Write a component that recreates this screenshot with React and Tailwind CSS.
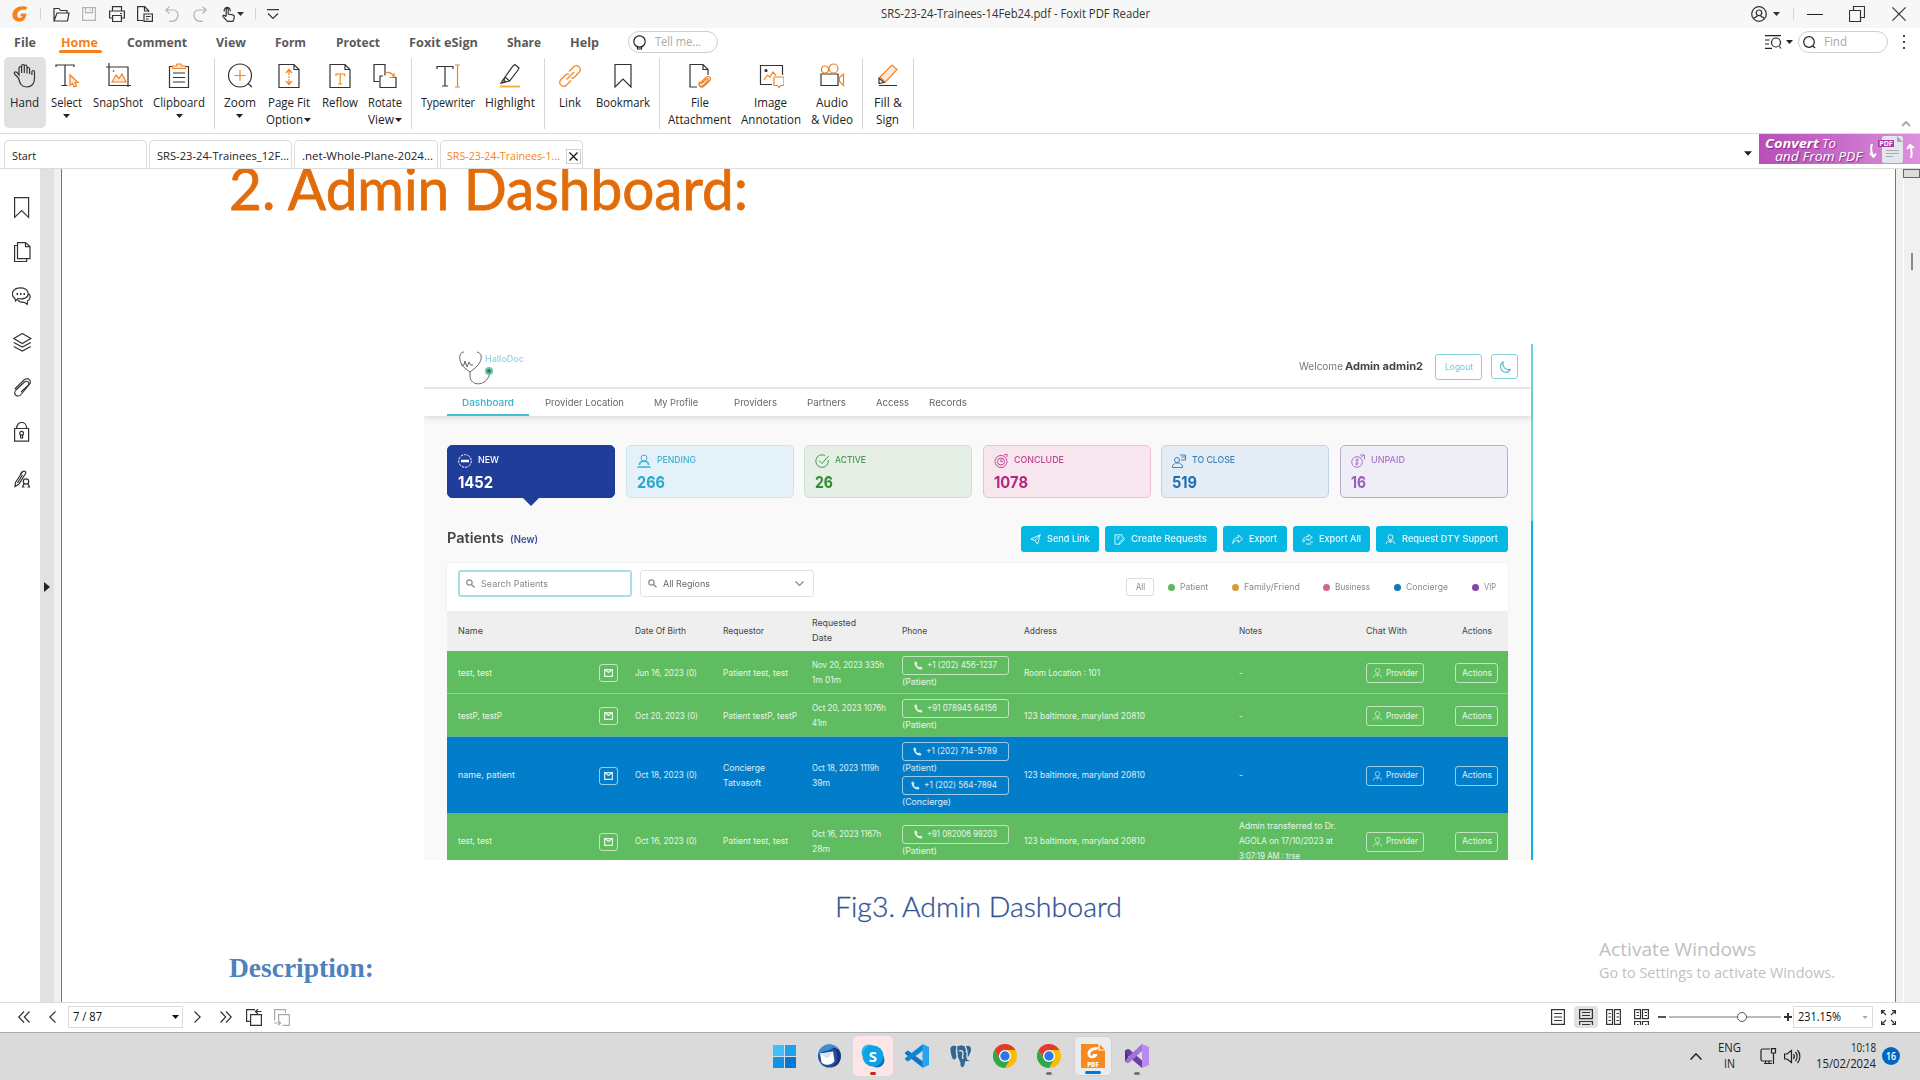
import { useLayoutEffect, useRef } from "react";

/* Text that is condensed or expanded to fill exactly w pixels. */
function Fit({ w, className = "", children }) {
  const ref = useRef(null);
  useLayoutEffect(() => {
    const el = ref.current;
    el.style.transform = "none";
    const natural = el.getBoundingClientRect().width;
    el.style.transform = `scaleX(${w / natural})`;
  }, [w, children]);
  return (
    <span className={"block shrink-0 whitespace-pre " + className} style={{ width: w }}>
      <span ref={ref} className="inline-block origin-left">{children}</span>
    </span>
  );
}

function Svg({ w, h, className = "", sw = 1.2, children }) {
  return (
    <svg width={w} height={h} viewBox={`0 0 ${w} ${h}`} fill="none" stroke="currentColor" strokeWidth={sw} className={"block shrink-0 " + className}>
      {children}
    </svg>
  );
}

const Caret = ({ className = "" }) => (
  <Svg w={7} h={4} className={className}><path d="M0 0h7L3.5 4z" fill="currentColor" stroke="none" /></Svg>
);
const Sep = ({ className }) => <div className={"shrink-0 w-px bg-[#d6d6d6] " + className} />;
const O = "#f58220";

/* ---------- title bar ---------- */
function TitleBar() {
  return (
    <div className="flex h-7 items-center bg-[#f7f7f7] text-[#333]">
      <Svg w={16} h={16} className="ml-3">
        <path d="M15.5 1.5C12-.8 4.5-.2 1.6 4.6c-2.500 4.500-1.200 9.800 4 11 5 1 8.600-2.600 8.800-8.100L9.500 7.600 8 10.200l2.600-.2c-1.300 2.500-5.200 2.700-5.400-.6C5 6 8.500 3.300 12 3.900c1.500.2 2.600-1 3.500-2.400z" fill="#f58220" stroke="none" />
      </Svg>
      <Sep className="ml-3 h-3" />
      <Svg w={17} h={15} className="ml-3"><path d="M1 14V1.500h5l1.500 2H14v2.500M1 14l3-8h12l-1.500 8z" /></Svg>
      <Svg w={14} h={14} className="ml-3 text-[#b4b4b4]"><path d="M.6.6h12.800v12.800H.6zM3.500.6v5h7v-5M8 2.500v1.500" /></Svg>
      <Svg w={16} h={16} className="ml-[13px]"><path d="M3.500 5V.6h9V5M3.500 12H.6V5h14.800v7h-2.900M3.600 9.500h8.800v6H3.600zM11 7.500h2" /></Svg>
      <Svg w={16} h={16} className="ml-3"><path d="M6 14.500H.6V.6h7l4 4V6M7.500.6V5h4M7 8h8.400v7.400H7zM9 10.500h4.500M9 13h2.500" /></Svg>
      <Svg w={14} h={16} className="ml-[12px] text-[#b4b4b4]"><path d="M4.500.6.800 4l3.700 3.500M1 4h7.500c6 0 6.500 10.500-1.500 11.300H4" /></Svg>
      <Svg w={14} h={16} className="ml-[14px] text-[#b4b4b4]"><path d="M9.500.6 13.200 4 9.500 7.500M13 4H5.500c-6 0-6.500 10.500 1.500 11.300h3" /></Svg>
      <Svg w={13} h={16} className="ml-[15px]"><path d="M4.200 10V3.500c0-1.500 2-1.500 2 0V8l4.500.8c1.500.3 1.800 1 1.600 2.200-.2 2-.7 3-1.300 4.400H5.500L1.200 10.800c-.8-1 .3-2 1.300-1.400l1.700 1.300M2.400 5.500a3 3 0 1 1 5.700-.2" /></Svg>
      <Caret className="ml-[2px]" />
      <Sep className="ml-[11px] h-3" />
      <Svg w={12} h={11} className="ml-[11px]"><path d="M0 .6h12M1 4.500l5 5 5-5" /></Svg>
      <Fit w={269} className="ml-[602px] font-['Open_Sans',sans-serif] text-[12px]">SRS-23-24-Trainees-14Feb24.pdf - Foxit PDF Reader</Fit>
      <Svg w={16} h={16} className="ml-[601px]"><circle cx="8" cy="8" r="7.300" /><circle cx="8" cy="6.800" r="2.800" /><path d="M2.500 12.500c2-2 3.500-1.500 4-3M13.500 12.500c-2-2-3.500-1.500-4-3" /></Svg>
      <Caret className="ml-[6px]" />
      <Sep className="ml-[13px] h-3" />
      <div className="ml-[13px] h-px w-4 bg-[#222]" />
      <Svg w={16} h={16} className="ml-[26px]"><path d="M.5 4.500h11v11H.5zM4.500 4V.5h11v11h-4" /></Svg>
      <Svg w={14} h={14} className="ml-[27px]"><path d="m.4.400 13.200 13.200M13.600.4.400 13.600" /></Svg>
    </div>
  );
}

/* ---------- menu ---------- */
const MENU = [
  ["File", 22, "ml-[14px]"], ["Home", 37, "ml-[25px]"], ["Comment", 60, "ml-[29px]"], ["View", 30, "ml-[29px]"],
  ["Form", 31, "ml-[29px]"], ["Protect", 44, "ml-[30px]"], ["Foxit eSign", 69, "ml-[29px]"], ["Share", 34, "ml-[29px]"], ["Help", 29, "ml-[29px]"],
];
function MenuBar() {
  return (
    <div className="flex h-7 items-center bg-white font-['Open_Sans',sans-serif] text-[13px] text-[#5a5a5a]">
      {MENU.map(([t, w, m]) => (
        <div key={t} className={"relative mt-[2px] " + m}>
          <Fit w={w} className={"font-bold " + (t === "Home" ? "text-[#f58220]" : "")}>{t}</Fit>
          {t === "Home" && <div className="absolute -left-[2px] top-[17px] h-[3px] w-[43px] rounded bg-[#f58220]" />}
        </div>
      ))}
      <div className="ml-[29px] flex h-[22px] w-[90px] items-center rounded-full border border-[#cfcfcf]">
        <Svg w={13} h={15} className="ml-1 text-[#222]"><circle cx="6.500" cy="6.500" r="5.700" /><path d="M4.500 12v2h4v-2" /></Svg>
        <Fit w={46} className="ml-[9px] text-[12px] text-[#aaa]">Tell me...</Fit>
      </div>
      <Svg w={17} h={14} className="ml-[1047px] text-[#222]"><path d="M0 .6h16M0 5h4.500M0 9h4M0 13.400h7M14.500 11.500l1.500 2" /><circle cx="11" cy="7.500" r="4.500" /></Svg>
      <Caret className="ml-1 text-[#222]" />
      <div className="ml-[5px] flex h-[22px] w-[90px] items-center rounded-full border border-[#cfcfcf]">
        <Svg w={13} h={13} className="ml-1 text-[#222]"><circle cx="6" cy="6" r="5.300" /><path d="m10 10 2 2" /></Svg>
        <Fit w={23} className="ml-[8px] text-[12px] text-[#aaa]">Find</Fit>
      </div>
      <div className="ml-[15px] flex flex-col gap-[4px]">
        <i className="size-[2px] bg-[#444]" /><i className="size-[2px] bg-[#444]" /><i className="size-[2px] bg-[#444]" />
      </div>
    </div>
  );
}

/* ---------- ribbon ---------- */
const I = {
  hand: <><path d="M6.500 15 3 11.500c-1.800-1.700.3-3.600 2-2L7 12V5c0-2 2.600-2 2.600 0v5V3c0-2 2.700-2 2.700 0v7V3.500c0-2 2.700-2 2.700 0V10.500 6c0-2 2.600-2 2.600 0M6.500 15c1.500 6 3 9 8 9 6 0 8-3 8-9V9c0-2-2.600-2-2.600 0v3M17.600 6v5" /></>,
  select: <><path d="M2 4V2h18v2M11 2v20.500M7.500 22.500h6" /><path d="M16 12v10.500l2.500-2 1.500 3.500 2.500-1-1.500-3.500h3z" stroke={O} fill="#fde9d8" /></>,
  snap: <><path d="M1 4h22v20M4 0v22.500h22" /><path d="M7 19l4-7 3 3.500 3-4.500 4 8z" stroke={O} fill="#fde9d8" /><circle cx="8.500" cy="8" r=".8" fill="currentColor" stroke="none" /></>,
  clip: <><path d="M3.500 3.500h19v21h-19zM7 10h12M7 14.500h12M7 19h12" /><path d="M6.500 5.500V3h4l.5-2h4l.5 2h4v2.500z" stroke={O} fill="#fde9d8" /></>,
  zoom: <><circle cx="13" cy="12.500" r="11.500" /><path d="m21 20.500 4 3.500" /><path d="M7.500 12.500h11M13 7v11" stroke={O} /></>,
  fit: <><path d="M3 1.500h15l5 5v18H3zM18 1.500v5h5" /><path d="M13 7v5M13 16v5M10 10l3-3.500 3 3.500M10 18l3 3.500 3-3.500M12 14h2" stroke={O} /></>,
  reflow: <><path d="M3 1.500h15l5 5v18H3zM18 1.500v5h5" /><path d="M9 13v-2h8.500v2M13.200 11v10M11 21h4.500" stroke={O} /></>,
  rotate: <><path d="M7 18.500H2v-17h11v11M13 24.500H8V13h3M13 24.500h11V14.500h-5" /><path d="M13 10c4-1.500 7 0 8.500 4M22 10v4.500h-4.500" stroke={O} /></>,
  type: <><path d="M2 6V3.500h16V6M10 3.500V23M7 23h6" /><path d="M20 2h5M20 24h5M22.500 2v22" stroke={O} /></>,
  high: <><path d="m8 14 8-11 2-1.500 4 3.500-1 2L12.500 18zM8 14l-2 5.500 6.500-1.500" /><path d="M4 20l2.500-4 2 3z" fill={O} /><path d="M3 23.500h20" stroke="#fbb034" strokeWidth="2" /></>,
  link: <g stroke={O}><path d="m9.500 16.500 7.500-7.500M12 8.500l4.500-4.500c4-3.500 9 1.500 5.500 5.500L17.500 14c-1 1-2.500 1.200-3.500.8M14 17.500 9.500 22c-4 3.500-9-1.500-5.500-5.500L8.500 12c1-1 2.500-1.200 3.500-.8" /></g>,
  book: <path d="M5 1.500h16v22.500l-8-8-8 8z" />,
  file: <><path d="M10 24H3V1.500h13l5 5V12M16 1.500v5h5" /><path d="m14 21 5.500-5c1-1 2.500.5 1.500 1.500l-5 5c-2 2-5-.5-3-2.500l6-5.500c3-2.500 6 1 3.500 3.500L17 23c-3 3-7-1-4-4" stroke={O} /></>,
  image: <><path d="M14 21.500H2.500v-19h22V12" /><circle cx="8" cy="7.500" r="1" fill="currentColor" /><path d="m6 17 3.500-5 2.500 2 3-5 3 3.500M16 14h10v8.500h-3.500l-1.500 2-1.500-2H16z" stroke={O} /></>,
  av: <><path d="M2 11h17v11.500H2z" /><path d="M20.500 14.500l4-3.500v11.500l-4-4z" stroke={O} /><circle cx="6" cy="6.500" r="3.500" stroke={O} /><circle cx="14.500" cy="5.500" r="4.500" stroke={O} /></>,
  fill: <><path d="M4 22.500h18M4 20v-5l5 4.500-5 1z" /><path d="m5 14 12-12 5 4.500L10.500 19z" stroke={O} fill="#fde9d8" /></>,
};
const RIBBON = [
  ["ml-1 w-[42px] rounded-[5px] bg-[#e1e1e1]", "hand", [["Hand", 29]]],
  ["w-[42px]", "select", [["Select", 31]], 1], ["w-[60px]", "snap", [["SnapShot", 50]]], ["w-[63px]", "clip", [["Clipboard", 52]], 1],
  "ml-[3px]", ["ml-[4px] w-[42px]", "zoom", [["Zoom", 32]], 1], ["w-[56px]", "fit", [["Page Fit", 42], ["Option", 37]], 2],
  ["w-[46px]", "reflow", [["Reflow", 36]]], ["w-[44px]", "rotate", [["Rotate", 34], ["View", 26]], 2],
  "ml-[4px]", ["ml-[5px] w-[62px]", "type", [["Typewriter", 54]]], ["w-[62px]", "high", [["Highlight", 50]]],
  "ml-[3px]", ["ml-[5px] w-[40px]", "link", [["Link", 22]]], ["w-[67px]", "book", [["Bookmark", 54]]],
  "ml-[2px]", ["ml-[4px] w-[72px]", "file", [["File", 18], ["Attachment", 63]]], ["w-[70px]", "image", [["Image", 33], ["Annotation", 60]]],
  ["w-[52px]", "av", [["Audio", 32], ["& Video", 42]]],
  "ml-[4px]", ["ml-[5px] w-[40px]", "fill", [["Fill &", 28], ["Sign", 23]]], "ml-[5px]",
];
function Ribbon() {
  return (
    <div className="flex h-[78px] border-b border-[#dcdcdc] bg-white pt-px font-['Open_Sans',sans-serif] text-[12px] leading-[17px] text-[#222]">
      {RIBBON.map((r, i) =>
        typeof r === "string" ? <Sep key={i} className={"mt-[1px] h-[71px] " + r} /> : (
          <div key={i} className={"flex h-[71px] flex-col items-center pr-px pt-[6px] " + r[0]}>
            <Svg w={26} h={26} className="text-[#333]">{I[r[1]]}</Svg>
            <div className="mt-[5px] flex flex-col items-center">
              {r[2].map(([t, w], k) => (
                <div key={k} className="flex items-center">
                  <Fit w={w}>{t}</Fit>
                  {r[3] === 2 && k === 1 && <Caret className="ml-px" />}
                </div>
              ))}
              {r[3] === 1 && <Caret className="mt-[3px]" />}
            </div>
          </div>
        )
      )}
      <Svg w={8} h={6} sw={2} className="ml-[988px] mt-[64px] text-[#aaa]"><path d="m0 5 4-4 4 4" /></Svg>
    </div>
  );
}

/* ---------- document tabs ---------- */
function Tabs() {
  const tab = "flex h-[28px] items-center rounded-t-[5px] border border-b-0 border-[#dcdcdc] pl-[7px] pt-[3px]";
  return (
    <div className="flex h-[35px] border-b border-[#dcdcdc] bg-white font-['Open_Sans',sans-serif] text-[11.500px] text-[#222]">
      <div className="flex items-end gap-[2px] pl-1">
        <div className={tab + " w-[143px]"}><Fit w={24}>Start</Fit></div>
        <div className={tab + " w-[143px]"}><Fit w={132}>SRS-23-24-Trainees_12F...</Fit></div>
        <div className={tab + " w-[144px]"}><Fit w={131}>.net-Whole-Plane-2024...</Fit></div>
        <div className={tab + " w-[143px] !pl-[6px]"}>
          <Fit w={113} className="text-[#f58220]">SRS-23-24-Trainees-1...</Fit>
          <div className="ml-[6px] flex size-[15px] items-center justify-center border border-[#d0d0d0]"><Svg w={9} h={9} className="text-[#111]"><path d="m.5.500 8 8M8.500.5l-8 8" /></Svg></div>
        </div>
      </div>
      <Caret className="ml-[1161px] mt-[17px] h-[5px] w-[8px]" />
      <div className="ml-[7px] flex h-[30px] w-[161px] overflow-hidden bg-gradient-to-r from-[#b84fb8] via-[#c76bc9] to-[#dd92dd] text-white">
        <div className="ml-[6px] mt-[2px] font-['Open_Sans',sans-serif] text-[13px] italic leading-[14px] [text-shadow:1px_1px_1px_#8a2d8a]">
          <div className="flex"><Fit w={54} className="font-bold">Convert</Fit><Fit w={14} className="ml-[3px]">To</Fit></div>
          <Fit w={87} className="ml-[10px] mt-[-1px]">and From PDF</Fit>
        </div>
        <Svg w={9} h={15} className="ml-[6px] mt-[10px]" sw={2}><path d="M4 0c-1.500 4-1 8 1 12M2 9l3.500 4L8 9.500" /></Svg>
        <div className="relative ml-[5px] mt-[2px] h-[27px] w-[21px] rounded-[2px] bg-[#e3e6ea]">
          <Svg w={21} h={27} className="text-[#a7acb3]"><path d="M15 0v6h6z" fill="currentColor" stroke="none" /><path d="M4 14.500h13M4 17.500h13M4 20.500h7" /></Svg>
          <div className="absolute -left-[4px] top-[4px] h-[7px] w-[16px] bg-[#a93bab] text-center font-['Open_Sans',sans-serif] text-[7px] font-bold leading-[7px]">PDF</div>
        </div>
        <Svg w={9} h={15} className="ml-[3px] mt-[9px]" sw={2}><path d="M5 15c1-4 1-8-1-12M1 6l3-4 4 3" /></Svg>
      </div>
    </div>
  );
}

/* ---------- side bar ---------- */
function SideBar() {
  return (
    <div className="flex w-[40px] shrink-0 flex-col bg-white text-[#333]">
      <Svg w={16} h={22} className="ml-[14px] mt-[28px]"><path d="M.6.6h14v19.800L7.600 13.500l-7 6.900z" /></Svg>
      <Svg w={17} h={20} className="ml-[14px] mt-[23px]"><path d="M3.500.6h8l4.500 4v12H3.500zM11.500.6v4h4.500M3.500 3.500H.6v16h12v-2.700" /></Svg>
      <Svg w={19} h={19} className="ml-[12px] mt-[25px]"><path d="M3 11.500C-2 8 .5.8 8.500.8s10 7.700 4.500 10.300c-2.500 1-5 1-7 .4L3.500 14zM17 7c2 2 1.500 5-1.500 7l-.3 3.500-3-2.200C9 15.500 7 15 6 13" /><path d="M4.500 7h1.500M8 7h1.500M11.500 7H13" strokeWidth="1.800" /></Svg>
      <Svg w={19} h={19} className="ml-[13px] mt-[27px]"><path d="m.8 5.500 8.500-5 8.500 5-8.500 5zM.8 9.500l8.500 4.500 8.500-4.500M.8 13.500 9.300 18l8.500-4.500" /></Svg>
      <Svg w={18} h={20} sw={1.100} className="ml-[14px] mt-[26px]"><path d="M.8 11 10 2c4-3.500 8.500 1 5 5L7 16.500c-3.500 4-8.500-.5-5-4.500l8.500-8c3-2 5.500.8 3.500 3.500L7 14" /></Svg>
      <Svg w={16} h={20} className="ml-[14px] mt-[24px]"><path d="M.6 6.500h14v12.700H.6zM2.600 6.500c0-8 10-8 10 0" /><circle cx="7.600" cy="11.300" r="1.900" /><path d="M6.600 13v3h2v-3" /></Svg>
      <Svg w={18} h={18} className="ml-[14px] mt-[28px]"><path d="M1 16.500l.5-4L8.500 2c1.500-2 4-.5 3 1.500L5 14zM6 5l2-3.500M8.500 5l-5 8" /><circle cx="12" cy="11.500" r="2.700" /><path d="m10 13.500-1.500 3.500h2M14 13.500l1.500 3.500h-2" /></Svg>
    </div>
  );
}

/* ---------- embedded dashboard figure ---------- */
const NAV = [
  ["Provider Location", 79, "ml-4"], ["My Profile", 44, "ml-[30px]"], ["Providers", 43, "ml-[36px]"],
  ["Partners", 39, "ml-[30px]"], ["Access", 33, "ml-[30px]"], ["Records", 38, "ml-[20px]"],
];
const CI = {
  NEW: <><circle cx="7" cy="7" r="6.300" strokeDasharray="2.500 1" /><path d="M3 7h8" strokeWidth="2.500" /></>,
  PENDING: <><circle cx="7" cy="4" r="3" /><path d="M2.500 11c0-5 9-5 9 0M.5 13h13" strokeWidth="1.600" /></>,
  ACTIVE: <><path d="M13.300 6A6.300 6.300 0 1 1 10 1.500M4 6.500l3 3L13.500 2" /></>,
  CONCLUDE: <><circle cx="7" cy="7.500" r="6" /><circle cx="7" cy="7.500" r="3.500" /><path d="M7 5v3l2-1M10 1l3-1v3" /></>,
  "TO CLOSE": <><circle cx="5" cy="6" r="2.500" /><path d="M.5 13.500h10v-2l-3-2.500h-4l-3 2.500zM8 1h5.500v5H9M9.500 3H13" /></>,
  UNPAID: <><circle cx="6" cy="8" r="5.300" /><path d="M8 6c-3-1.500-4 1-2 2s1 3-2 2M6 4.500v7M9 1h4.500v4.500M13 1 9.500 4" /></>,
};
const CARDS = [
  ["NEW", 21, "1452", 35, "border-[#1f3a93] bg-[#203d99] text-white", "text-white"],
  ["PENDING", 39, "266", 28, "border-[#c9e6f2] bg-[#e4f1f8] text-[#3fb2d3]", "text-[#27a9cf]"],
  ["ACTIVE", 31, "26", 18, "border-[#cbe3cb] bg-[#e6efe5] text-[#4a9a4e]", "text-[#2f8c34]"],
  ["CONCLUDE", 50, "1078", 34, "border-[#efbfd8] bg-[#f8e6ef] text-[#bb4690]", "text-[#b32a7e]"],
  ["TO CLOSE", 43, "519", 25, "border-[#bfd6e8] bg-[#e4edf5] text-[#3f82ba]", "text-[#1f6fb0]"],
  ["UNPAID", 34, "16", 15, "border-[#b9abc9] bg-[#efedf6] text-[#a978c4]", "text-[#965fb8]"],
];
const person = <><circle cx="4.500" cy="2.800" r="2.300" /><path d="M.5 9.500C.5 5 8.500 5 8.500 9.500M4 6.500l.5 2 .500-2" /></>;
const BUTTONS = [
  ["Send Link", 43, "w-[78px]", <path d="M.8 5 10.200.8 7.500 10.200 5 6.500zM5 6.500 10.200.8" />],
  ["Create Requests", 76, "w-[112px]", <path d="M6 10.200H1V.8h7v3M3 3h3M3 5h2M5.500 8.500l4.500-5 1 1-4.500 5H5z" />],
  ["Export", 28, "w-[64px]", <path d="M.8 9.500c0-4 2-6 5.500-6V1l4.200 3.800L6.300 8.500V6C4 6 2 7 .8 9.500z" />],
  ["Export All", 42, "w-[77px]", <path d="M.8 8.500c0-4 2-6 5.500-6V.5l4 3-4 3V5C4 5 2 6 2 8M4 10h5M8 8h3" />],
  ["Request DTY Support", 96, "w-[132px]", <><circle cx="5.500" cy="3.200" r="2.500" /><path d="M1 10.300C1 5.500 10 5.500 10 10.300M4.500 7l1 2 1-2" /></>],
];
const LEGEND = [
  ["Patient", 28, "ml-[14px] bg-[#5cb85c]", "ml-[5px]"], ["Family/Friend", 56, "ml-[24px] bg-[#d99a3a]", "ml-[5px]"],
  ["Business", 35, "ml-[23px] bg-[#d0698c]", "ml-[5px]"], ["Concierge", 42, "ml-[24px] bg-[#1578b0]", "ml-[5px]"], ["VIP", 12, "ml-[24px] bg-[#8347a8]", "ml-[5px]"],
];
const ROWS = [
  { c: "h-[43px] border-b border-[#95d095] bg-[#5fbc60] pt-[2px]", name: ["test, test", 34], dob: ["Jun 16, 2023 (0)", 62], req: [["Patient test, test", 65]], date: [["Nov 20, 2023 335h", 72], ["1m 01m", 29]], ph: [["+1 (202) 456-1237", 70, "(Patient)", 35]], ad: ["Room Location : 101", 76] },
  { c: "h-[43px] border-b border-[#5fb5a0] bg-[#5fbc60] pt-[2px]", name: ["testP, testP", 44], dob: ["Oct 20, 2023 (0)", 63], req: [["Patient testP, testP", 74]], date: [["Oct 20, 2023 1076h", 74], ["41m", 15]], ph: [["+91 078945 64156", 70, "(Patient)", 35]], ad: ["123 baltimore, maryland 20810", 121] },
  { c: "h-[77px] border-b border-[#5fb5a0] bg-[#027dc9] pt-px", name: ["name, patient", 57], dob: ["Oct 18, 2023 (0)", 62], req: [["Concierge", 42], ["Tatvasoft", 38]], date: [["Oct 18, 2023 1119h", 67], ["39m", 18]], ph: [["+1 (202) 714-5789", 71, "(Patient)", 35], ["+1 (202) 564-7894", 73, "(Concierge)", 49]], ad: ["123 baltimore, maryland 20810", 121] },
  { c: "h-[55px] bg-[#5fbc60]", name: ["test, test", 34], dob: ["Oct 16, 2023 (0)", 62], req: [["Patient test, test", 65]], date: [["Oct 16, 2023 1167h", 69], ["28m", 18]], ph: [["+91 082006 99203", 70, "(Patient)", 35]], ad: ["123 baltimore, maryland 20810", 121], notes: [["Admin transferred to Dr.", 97], ["AGOLA on 17/10/2023 at", 94], ["3:07:19 AM : trse", 61]] },
];
const GRID = "grid grid-cols-[141px_36px_88px_89px_90px_122px_215px_127px_89px_53px] items-center pl-[11px]";
const outline = "flex items-center rounded-[3px] border border-white/60";

function Figure() {
  return (
    <div className="flex h-[516px] w-[1109px] overflow-hidden bg-[#f9f9f9] font-[Inter,sans-serif]">
      <div className="flex w-[1107px] shrink-0 flex-col blur-[0.3px]">
        <div className="flex h-[45px] shrink-0 items-center border-b-2 border-[#ececec] bg-white pt-[2px]">
          <Svg w={36} h={36} sw={1} className="ml-[34px] mt-[3px] text-[#666]">
            <path d="M6 2C1 2 1 9 3 13c2 4 5 6 9 9 4-3 8-6 10-10 2-4 2-9-3-10M3 15h3l1-4 2 6 2-5 1.500 3H15M12 22v4c0 11 18 11 20-4" />
            <circle cx="31" cy="21" r="4" fill="#6cc6ac" stroke="none" /><circle cx="31" cy="21" r="2" fill="#2d7f69" stroke="none" />
          </Svg>
          <Fit w={39} className="-ml-[9px] -mt-[15px] text-[9px] font-medium text-[#93d3e6]">HalloDoc</Fit>
          <Fit w={44} className="ml-[775px] text-[10px] text-[#777]">Welcome</Fit>
          <Fit w={78} className="ml-[2px] text-[11px] font-bold text-[#444]">Admin admin2</Fit>
          <div className="ml-[12px] flex h-[26px] w-[47px] items-center justify-center rounded-[3px] border border-[#86d3dc]"><Fit w={28} className="text-[9px] text-[#6cc7d8]">Logout</Fit></div>
          <div className="ml-[9px] flex h-[25px] w-[27px] items-center justify-center rounded-[3px] border border-[#86d3dc] text-[#5dc0d0]"><Svg w={12} h={12}><path d="M4 .8C0 4 1 11 7 11.300c2 0 3.500-1 4.300-2.800C6 9.500 3.500 5.500 4 .8z" /></Svg></div>
        </div>
        <div className="relative flex h-[27px] shrink-0 bg-white pl-[23px] text-[9.500px] leading-[27px] text-[#666] shadow-[0_2px_6px_rgba(0,0,0,0.13)]">
          <div className="w-[82px] border-b-2 border-[#45bdd2] pl-[15px] font-medium text-[#2fb3cd]"><Fit w={52}>Dashboard</Fit></div>
          {NAV.map(([t, w, m]) => <Fit key={t} w={w} className={m}>{t}</Fit>)}
        </div>
        <div className="ml-[23px] mt-[29px] flex w-[1061px] shrink-0 flex-col">
          <div className="grid grid-cols-6 gap-x-[10.600px]">
            {CARDS.map(([t, w, n, nw, c, nc]) => (
              <div key={t} className={"relative h-[53px] rounded-[5px] border pl-[10px] pt-[7px] " + c}>
                <div className="flex h-[15px] items-center">
                  <Svg w={14} h={14} sw={1}>{CI[t]}</Svg>
                  <Fit w={w} className="ml-[6px] text-[9.500px] font-medium">{t}</Fit>
                </div>
                <Fit w={nw} className={"mt-[5px] text-[16.500px] font-bold leading-[18px] " + nc}>{n}</Fit>
                {t === "NEW" && <Svg w={16} h={8} className="absolute left-[75px] top-[52px]"><path d="M0 0h16L8 8z" fill="#203d99" stroke="none" /></Svg>}
              </div>
            ))}
          </div>
          <div className="mt-[28px] flex h-[26px] items-center">
            <Fit w={57} className="-mt-[3px] text-[14px] font-semibold text-[#444]">Patients</Fit>
            <Fit w={28} className="ml-[6px] text-[10px] font-semibold text-[#3d509a]">(New)</Fit>
            <div className="ml-auto flex gap-[6px]">
              {BUTTONS.map(([t, w, c, icon]) => (
                <div key={t} className={"flex h-[26px] items-center rounded-[3px] bg-[#05b8e4] pl-[9px] text-[9.500px] font-medium text-white/90 " + c}>
                  <Svg w={11} h={11} sw={0.900}>{icon}</Svg>
                  <Fit w={w} className="ml-[6px]">{t}</Fit>
                </div>
              ))}
            </div>
          </div>
          <div className="mt-[11px] flex h-[48px] items-center rounded-t-[4px] bg-white shadow-[0_0_3px_rgba(0,0,0,0.06)]">
            <div className="-mt-[7px] ml-[11px] flex h-[27px] w-[174px] items-center rounded-[3px] border-2 border-[#aadde6] text-[9px] text-[#888]">
              <Svg w={9} h={9} className="ml-[6px]"><circle cx="3.500" cy="3.500" r="2.700" /><path d="m5.500 5.500 3 3" /></Svg><Fit w={67} className="ml-[6px]">Search Patients</Fit>
            </div>
            <div className="-mt-[7px] ml-[8px] flex h-[27px] w-[174px] items-center rounded-[3px] border border-[#e2e2e2] text-[9px] text-[#666]">
              <Svg w={9} h={9} className="ml-[7px] text-[#888]"><circle cx="3.500" cy="3.500" r="2.700" /><path d="m5.500 5.500 3 3" /></Svg><Fit w={47} className="ml-[6px]">All Regions</Fit>
              <Svg w={9} h={6} className="ml-[85px] text-[#888]"><path d="m.5.500 4 4 4-4" /></Svg>
            </div>
            <div className="ml-[312px] flex h-[18px] w-[28px] items-center justify-center rounded-[2px] border border-[#ddd] text-[8.500px] text-[#888]"><Fit w={9}>All</Fit></div>
            {LEGEND.map(([t, w, d, m]) => (
              <div key={t} className="flex items-center text-[8.500px] text-[#888]"><i className={"size-[7px] rounded-full " + d} /><Fit w={w} className={m}>{t}</Fit></div>
            ))}
          </div>
          <div className={GRID + " h-[40px] bg-[#efefef] pb-[2px] text-[9px] leading-[15px] text-[#444]"}>
            <Fit w={25}>Name</Fit><span /><Fit w={51}>Date Of Birth</Fit><Fit w={41}>Requestor</Fit>
            <div><Fit w={44}>Requested</Fit><Fit w={20}>Date</Fit></div>
            <Fit w={25}>Phone</Fit><Fit w={33}>Address</Fit><Fit w={23}>Notes</Fit><Fit w={41}>Chat With</Fit><Fit w={30} className="ml-[7px]">Actions</Fit>
          </div>
          {ROWS.map((r, i) => (
            <div key={i} className={GRID + " shrink-0 text-[8.500px] leading-[15px] text-white/85 " + r.c}>
              <Fit w={r.name[1]}>{r.name[0]}</Fit>
              <div className={outline + " h-[18px] w-[19px] justify-center"}><Svg w={9} h={8}><path d="M.6.600h7.800v6.800H.6zM.6.600l3.900 3 3.900-3" /></Svg></div>
              <Fit w={r.dob[1]}>{r.dob[0]}</Fit>
              <div>{r.req.map(([t, w]) => <Fit key={t} w={w}>{t}</Fit>)}</div>
              <div>{r.date.map(([t, w]) => <Fit key={t} w={w}>{t}</Fit>)}</div>
              <div>
                {r.ph.map(([t, w, p, pw]) => (
                  <div key={t}>
                    <div className={outline + " h-[19px] w-[107px] justify-end pr-[11px]"}>
                      <Svg w={9} h={9}><path d="M.5 1 2 .5l1.500 2-.8 1.200c.5 1.200 1.200 2 2.500 2.600L6.500 5.500l2 1.500-.8 1.500C4 9 0 5 .5 1z" fill="currentColor" stroke="none" /></Svg>
                      <Fit w={w} className="ml-[4px]">{t}</Fit>
                    </div>
                    <Fit w={pw}>{p}</Fit>
                  </div>
                ))}
              </div>
              <Fit w={r.ad[1]}>{r.ad[0]}</Fit>
              <div>{r.notes ? r.notes.map(([t, w]) => <Fit key={t} w={w}>{t}</Fit>) : "-"}</div>
              <div className={outline + " h-[20px] w-[58px] pl-[6px]"}><Svg w={9} h={10} sw={0.800} className="opacity-80">{person}</Svg><Fit w={32} className="ml-[4px]">Provider</Fit></div>
              <div className={outline + " h-[20px] w-[43px] justify-center"}><Fit w={30}>Actions</Fit></div>
            </div>
          ))}
        </div>
      </div>
      <div className="w-[2px] shrink-0 bg-[#05b8e4]"><div className="h-[177px] bg-[#6ad5dc]" /></div>
    </div>
  );
}

/* ---------- document area ---------- */
function Main() {
  return (
    <div className="flex h-[834px] border-b border-[#dcdcdc] bg-white">
      <SideBar />
      <div className="flex w-[14px] shrink-0 items-center bg-[#e1e1e1]"><Svg w={6} h={10} className="ml-[4px] mt-[2px] text-[#222]"><path d="M0 0v10l6-5z" fill="currentColor" stroke="none" /></Svg></div>
      <div className="w-[7px] shrink-0 bg-[#f0f0f0]" />
      <div className="flex w-[1835px] shrink-0 flex-col overflow-hidden border-x border-[#767676] pl-[167px]">
        <Fit w={519} className="-mt-[16px] h-[70px] font-[Lato,sans-serif] text-[59px] leading-[70px] text-[#e36c0a] [-webkit-text-stroke:0.800px_#e36c0a]">2. Admin Dashboard:</Fit>
        <div className="ml-[195px] mt-[121px]"><Figure /></div>
        <Fit w={287} className="ml-[606px] mt-[28px] h-[37px] font-[Lato,sans-serif] text-[28px] font-light leading-[36px] text-[#2f5496] [-webkit-text-stroke:0.300px_#2f5496]">Fig3. Admin Dashboard</Fit>
        <div className="flex items-start">
          <Fit w={145} className="mt-[26px] font-['Liberation_Serif',serif] text-[28px] font-bold leading-[34px] text-[#4f81bd]">Description:</Fit>
          <div className="ml-[1225px] mt-[12px] font-['Open_Sans',sans-serif] text-[#bfbfbf]">
            <Fit w={157} className="text-[19px] leading-[25px]">Activate Windows</Fit>
            <Fit w={236} className="text-[15px] leading-[20px]">Go to Settings to activate Windows.</Fit>
          </div>
        </div>
      </div>
      <div className="w-[7px] shrink-0 bg-[#f0f0f0]" />
      <div className="flex w-[17px] shrink-0 flex-col border-l border-white bg-[#f0f0f0]">
        <div className="-ml-px h-[9px] border border-[#666] bg-[#dcdcdc]" />
        <div className="ml-[7px] mt-[75px] h-[17px] w-[2px] bg-[#888]" />
      </div>
    </div>
  );
}

/* ---------- status bar ---------- */
function StatusBar() {
  return (
    <div className="flex h-[30px] items-center border-b border-[#adadad] bg-white pb-[1px] font-['Open_Sans',sans-serif] text-[12px] text-[#333]">
      <Svg w={12} h={12} className="ml-[18px]"><path d="M6 .5.800 6 6 11.500M11.500.5 6.300 6l5.200 5.500" /></Svg>
      <Svg w={7} h={12} className="ml-[19px]"><path d="M6.500.5.800 6l5.700 5.500" /></Svg>
      <div className="ml-[12px] flex h-[22px] w-[115px] items-center border border-[#dcdcdc] text-[#111]"><Fit w={29} className="ml-[4px]">7 / 87</Fit><Caret className="ml-[70px]" /></div>
      <Svg w={7} h={12} className="ml-[11px]"><path d="M.5.500 6.200 6 .5 11.500" /></Svg>
      <Svg w={12} h={12} className="ml-[19px]"><path d="M.5.500 5.700 6 .5 11.500M6 .500 11.200 6 6 11.500" /></Svg>
      <Svg w={16} h={17} className="ml-[14px]"><path d="M9 .6H.6v11.800H4M4.600 5.600h10.800v10.800H4.600zM15.500 2.500H9.500M12 0 9.500 2.500 12 5" /></Svg>
      <Svg w={16} h={17} className="ml-[12px] text-[#aaa]"><path d="M11.500 4V.6H.6v10.800M4.600 12V5.600h10.800v10.800H8.500M0 14h6.500M4 11.500 6.500 14 4 16.500" /></Svg>
      <Svg w={14} h={16} className="ml-[1261px]"><path d="M.6.600h12.800v14.800H.6zM3 4.500h8M3 8h8M3 11.500h8" /></Svg>
      <div className="ml-[9px] flex h-[22px] w-[24px] items-center justify-center rounded-[4px] bg-[#e1e1e1]"><Svg w={14} h={16}><path d="M.6.600h12.800v9H.6zM3 3.500h8M3 6.500h8M.6 16v-3.500h12.800V16M3 15.500h8" /></Svg></div>
      <Svg w={15} h={16} className="ml-[8px]"><path d="M.6.600h5.900v14.800H.6zM8.500.6h5.900v14.800H8.500zM2.500 4.500h2.500M2.500 8h2.500M2.500 11.500h2.500M10.500 4.500h2.500M10.500 8h2.500M10.500 11.500h2.500" /></Svg>
      <Svg w={15} h={16} className="ml-[13px]"><path d="M.6.600h5.900v9H.6zM8.500.6h5.900v9H8.500zM2.500 3.500h2.500M2.500 6.500h2.500M10.500 3.500h2.500M10.500 6.500h2.500M.6 16v-3.500h5.900V16M8.500 16v-3.500h5.900V16M3 15.500h1.500M11 15.500h1.500" /></Svg>
      <div className="ml-[9px] h-[2px] w-[8px] bg-[#555]" />
      <div className="relative ml-[3px] h-[2px] w-[112px] bg-[#bcbcbc]"><div className="absolute -top-[4px] left-[68px] size-[10px] rounded-full border border-[#555] bg-white" /></div>
      <Svg w={8} h={8} sw={2} className="ml-[3px]"><path d="M0 4h8M4 0v8" /></Svg>
      <div className="ml-[1px] flex h-[22px] w-[80px] items-center border border-[#dcdcdc] text-[#111]"><Fit w={43} className="ml-[4px]">231.15%</Fit><Caret className="ml-[21px] !h-[3px] !w-[6px] text-[#aaa]" /></div>
      <Svg w={15} h={15} className="ml-[8px]"><path d="M5 5 .800.800M.6 4V.6H4M10 5 14.200.800M11 .6h3.400V4M5 10 .8 14.200M.6 11v3.400H4M10 10l4.200 4.200M11 14.400h3.400V11" /></Svg>
    </div>
  );
}

/* ---------- task bar ---------- */
function Chrome() {
  return (
    <Svg w={24} h={24}>
      <g stroke="none">
        <circle cx="12" cy="12" r="12" fill="#fbbc05" />
        <path d="M12 6h10.400A12 12 0 0 0 1.600 6l5.200 9z" fill="#e33b2e" />
        <path d="M1.600 6A12 12 0 0 0 12 24l5.200-9-5.200 3-5.200-3z" fill="#2da94f" />
        <circle cx="12" cy="12" r="6" fill="#fff" /><circle cx="12" cy="12" r="4.700" fill="#2a79e8" />
      </g>
    </Svg>
  );
}
const Slot = ({ className, children, bar, wide = "w-[6px]" }) => (
  <div className={"relative flex h-[40px] shrink-0 items-center justify-center " + className}>
    {children}
    {bar && <div className={"absolute bottom-[1px] h-[3px] rounded-full " + wide + " " + bar} />}
  </div>
);
function TaskBar() {
  return (
    <div className="flex h-[47px] items-center bg-[#dadada] pb-px font-['Open_Sans',sans-serif] text-[12px] text-[#222]">
      <div className="ml-[773px] grid grid-cols-2 gap-px">
        <i className="size-[11px] bg-[#3fc0f8]" /><i className="size-[11px] bg-[#1ea0ec]" /><i className="size-[11px] bg-[#1493e4]" /><i className="size-[11px] bg-[#0577d3]" />
      </div>
      <Slot className="ml-[21px] w-[24px]">
        <Svg w={24} h={24}><g stroke="none"><circle cx="12.500" cy="12" r="11.500" fill="#234f9e" /><path d="M1 11C2 4 8-.5 14 .5c3 .5 6 2 8 5-4-2-8-1-11 1-4 0-7 2-10 4.500z" fill="#3d8fd6" /><path d="M14 4c5 1 7 5 6 11-.5 4-2 6-5 8 7-1 10-8 8-14-2-4-5-6-9-5z" fill="#1b2f7a" /><path d="m3 9.500 13-2 1.500 9.500c-2 4-9 5.500-13 1.500z" fill="#fff" /><path d="m3.500 10 7 4.500L16 8" fill="#d8e2ee" /></g></Svg>
      </Slot>
      <Slot className="ml-[12px] w-[40px] rounded-[5px] bg-[#fbe5e6]" bar="bg-[#c42b1c]">
        <Svg w={24} h={24}><g stroke="none"><circle cx="8" cy="8" r="7.500" fill="#2cb5ec" /><circle cx="16" cy="16" r="7.500" fill="#0a6fc2" /><circle cx="12" cy="12" r="10.500" fill="#0aa3e4" /></g><text x="12" y="17.500" textAnchor="middle" fontFamily="Open Sans, sans-serif" fontWeight="700" fontSize="15" fill="#fff" stroke="none">S</text></Svg>
      </Slot>
      <Slot className="ml-[12px] w-[24px]">
        <Svg w={24} h={24}><g stroke="none"><path d="M18 24v-6.500L3 6.500.3 8.200c-.5.600-.5 1.200 0 1.800z" fill="#1273c4" /><path d="M18 0v6.500L3 17.500.3 15.800c-.5-.6-.5-1.200 0-1.800z" fill="#0d86d6" /><path d="M17.500 0 24 3v18l-6.500 3z" fill="#27a4f0" /></g></Svg>
      </Slot>
      <Slot className="ml-[20px] w-[24px]">
        <Svg w={24} h={24}><path d="M8 2C4 0 .5 2 1 6c.5 5 2 10 4 10s2-2 3-3c-1-4-1-8 0-11zM8 2c3-1.500 5-1.500 8 0 3-1.500 6-.5 6.500 3 .3 3-2 7-4.500 10 1 1 3 .5 4 .500-2 2-4 2.500-5.500 2-.5 4-1 5.500-3 6-2.500 0-2.500-2-2.500-5-1-1-1-3-2-4.500" fill="#336791" stroke="#e8eef4" strokeWidth=".8" /><path d="M16 2c2 3 2.500 7 2 12M10 7c2-1 4 0 4 2s-1 3 0 6M16.500 7.500h1.500" stroke="#e8eef4" /></Svg>
      </Slot>
      <Slot className="ml-[20px] w-[24px]"><Chrome /></Slot>
      <Slot className="ml-[20px] w-[24px]" bar="bg-[#787878]"><Chrome /></Slot>
      <Slot className="ml-[13px] w-[38px] rounded-[5px] border border-[#d2d2d2] bg-[#ececec]" bar="bg-[#0078d7]" wide="w-[16px]">
        <Svg w={24} h={24}><path d="M0 0h18l6 6v18H0z" fill="#f7891f" stroke="none" /><path d="M18 0v6h6" fill="#f7891f" stroke="#fff" /><path d="M18 3.500C10 2 6.500 6 6.500 10c0 5 9 6.500 10 0h-4.500c-.5 3-3 2-2.500-.5.500-3 4-3.500 6-3.500z" fill="#fff" stroke="none" /><text x="12" y="22.500" textAnchor="middle" fontFamily="Open Sans, sans-serif" fontWeight="800" fontSize="6" fill="#fff" stroke="none">PDF</text></Svg>
      </Slot>
      <Slot className="ml-[13px] w-[24px]" bar="bg-[#787878]">
        <Svg w={24} h={24}><g stroke="none"><path d="M0 6.500 3 5v14l-3-1.500z" fill="#54307f" /><path d="M0 6.500 4 5l13 11.500V24L3 12z" fill="#6b3fa8" /><path d="M0 17.500 4 19 17 7V0L3 13z" fill="#a374d8" /><path d="M17 0l7 3v18l-7 3z" fill="#b98af0" /></g></Svg>
      </Slot>
      <Svg w={12} h={7} sw={1.500} className="ml-[541px]"><path d="m.5 6.500 5.500-5.700 5.500 5.700" /></Svg>
      <div className="ml-[16px] flex flex-col items-center leading-[16px]"><Fit w={23}>ENG</Fit><Fit w={11}>IN</Fit></div>
      <Svg w={17} h={17} className="ml-[19px]"><path d="M10 1H2.500C1.500 1 1 1.500 1 2.500v9c0 1 .5 1.500 1.500 1.500H12M4 15.500h8M5.500 13v2M9 13v2M11.500.6h4V5h-4zM13.500 5v11" /></Svg>
      <Svg w={17} h={15} className="ml-[7px]"><path d="M.6 5v5H3l4.500 3.500v-12L3 5zM9.500 5c1 1.500 1 3.500 0 5M11.500 3c2.200 2.500 2.200 6.500 0 9M13.500 1c3.200 3.500 3.200 9.500 0 13" /></Svg>
      <div className="ml-[15px] flex flex-col items-end leading-[16px]"><Fit w={25}>10:18</Fit><Fit w={60}>15/02/2024</Fit></div>
      <div className="ml-[6px] flex size-[18px] items-center justify-center rounded-full bg-[#0067c0] text-[10px] font-semibold text-white"><Fit w={10}>16</Fit></div>
    </div>
  );
}

export default function App() {
  return (
    <div className="h-[1080px] w-[1920px] overflow-hidden bg-white">
      <TitleBar />
      <MenuBar />
      <Ribbon />
      <Tabs />
      <Main />
      <StatusBar />
      <TaskBar />
    </div>
  );
}
